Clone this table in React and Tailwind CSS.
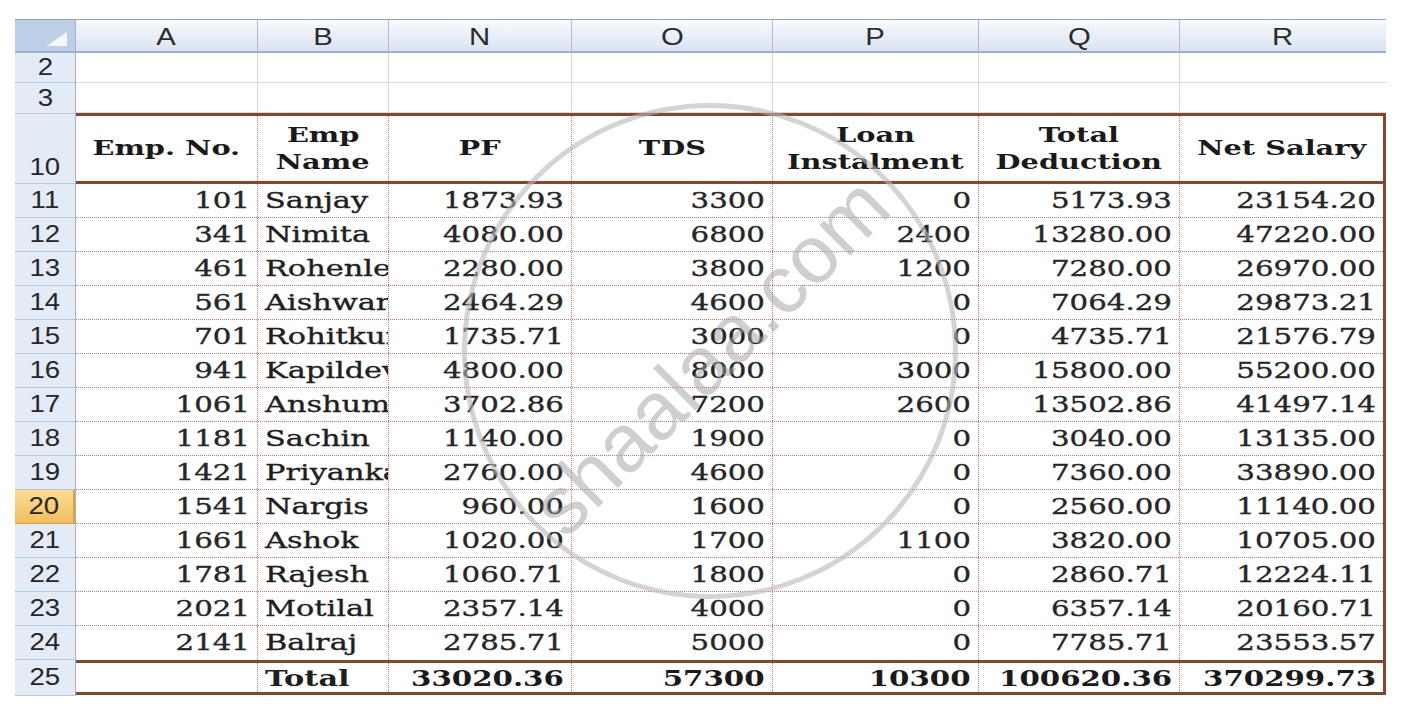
const rows = [
  [11, "101", "Sanjay", "1873.93", "3300", "0", "5173.93", "23154.20"],
  [12, "341", "Nimita", "4080.00", "6800", "2400", "13280.00", "47220.00"],
  [13, "461", "Rohenlei", "2280.00", "3800", "1200", "7280.00", "26970.00"],
  [14, "561", "Aishwarya", "2464.29", "4600", "0", "7064.29", "29873.21"],
  [15, "701", "Rohitkumar", "1735.71", "3000", "0", "4735.71", "21576.79"],
  [16, "941", "Kapildev", "4800.00", "8000", "3000", "15800.00", "55200.00"],
  [17, "1061", "Anshuman", "3702.86", "7200", "2600", "13502.86", "41497.14"],
  [18, "1181", "Sachin", "1140.00", "1900", "0", "3040.00", "13135.00"],
  [19, "1421", "Priyanka", "2760.00", "4600", "0", "7360.00", "33890.00"],
  [20, "1541", "Nargis", "960.00", "1600", "0", "2560.00", "11140.00"],
  [21, "1661", "Ashok", "1020.00", "1700", "1100", "3820.00", "10705.00"],
  [22, "1781", "Rajesh", "1060.71", "1800", "0", "2860.71", "12224.11"],
  [23, "2021", "Motilal", "2357.14", "4000", "0", "6357.14", "20160.71"],
  [24, "2141", "Balraj", "2785.71", "5000", "0", "7785.71", "23553.57"],
];

const totals = ["33020.36", "57300", "10300", "100620.36", "370299.73"];

const letters = [
  ["A", "w-[182px]"],
  ["B", "w-[131px]"],
  ["N", "w-[183px]"],
  ["O", "w-[201px]"],
  ["P", "w-[206px]"],
  ["Q", "w-[201px]"],
  ["R", "flex-1"],
];

const gridCols = "grid grid-cols-[182px_131px_183px_201px_206px_201px_1fr]";
const dotR = "border-r border-dotted border-[#de6b6b]";

// row number cell on the left
const RowHead = ({ n, h, active, end }) => (
  <div
    className={`${h} flex ${end ? "items-end pb-1" : "items-center"} justify-center border-b ${
      active
        ? "bg-gradient-to-b from-[#fbdc93] to-[#f2bf5c] border-[#d9a048] border-r-2 border-r-[#d9a048]"
        : "bg-[#e2ebf6] border-[#b7c8dc]"
    }`}
  >
    <span className="inline-block scale-x-[1.2] text-[23px] leading-none text-[#262626]">{n}</span>
  </div>
);

const Num = ({ v, bold, last }) => (
  <div className={`flex items-center justify-end pr-[7px] overflow-hidden ${last ? "" : dotR}`}>
    <span
      className={`inline-block origin-right scale-x-[1.33] text-[22px] leading-none ${
        bold ? "font-bold text-[#1a1a1a]" : "text-[#262626] [-webkit-text-stroke:0.35px_#262626]"
      }`}
    >
      {v}
    </span>
  </div>
);

const Name = ({ v, bold }) => (
  <div className={`flex items-center pl-[7px] overflow-hidden whitespace-nowrap ${dotR}`}>
    <span
      className={`inline-block origin-left scale-x-[1.38] text-[22px] leading-none text-[#1f1f1f] ${
        bold ? "font-bold" : "[-webkit-text-stroke:0.35px_#1f1f1f]"
      }`}
    >
      {v}
    </span>
  </div>
);

const Head = ({ lines, last }) => (
  <div className={`flex flex-col items-center justify-center leading-[27px] ${last ? "" : dotR}`}>
    {lines.map((l) => (
      <span key={l} className="inline-block scale-x-[1.44] text-[20px] font-bold text-[#1a1a1a] whitespace-nowrap">
        {l}
      </span>
    ))}
  </div>
);

export default function App() {
  return (
    <div className="relative w-[1416px] h-[704px] overflow-hidden bg-white pt-[19px] pl-[15px] font-['DejaVu_Serif',serif]">
      <div className="flex w-[1371px] border-t border-[#8ea5c2]">
        {/* row numbers */}
        <div className="w-[61px] flex flex-col font-['Liberation_Sans',Arial,sans-serif] border-r border-[#9fb4cc]">
          <div className="h-[33px] relative bg-[#bccfe7] border-b-2 border-[#9bb2ce]">
            <svg className="absolute right-[8px] bottom-[5px]" width="20" height="14" viewBox="0 0 20 14">
              <polygon points="20,0 20,14 0,14" fill="#f4f8fc" />
            </svg>
          </div>
          <RowHead n="2" h="h-[30px]" />
          <RowHead n="3" h="h-[31px]" />
          <RowHead n="10" h="h-[70px]" end />
          {rows.map((r) => (
            <RowHead key={r[0]} n={r[0]} h="h-[34px]" active={r[0] === 20} />
          ))}
          <RowHead n="25" h="h-[36px]" />
        </div>

        <div className="flex-1 flex flex-col">
          {/* column letters */}
          <div className="flex h-[33px] bg-gradient-to-b from-[#f8fafd] to-[#d9e4f1] border-b-2 border-[#9bb2ce] font-['Liberation_Sans',Arial,sans-serif]">
            {letters.map(([l, w], i) => (
              <div
                key={l}
                className={`${w} flex items-center justify-center pt-[3px] ${i < 6 ? "border-r border-[#a9bcd4]" : ""}`}
              >
                <span className="inline-block scale-x-[1.22] text-[24px] leading-none text-[#2b2b2b]">{l}</span>
              </div>
            ))}
          </div>

          {/* empty rows 2 and 3 */}
          {["h-[30px]", "h-[30px]"].map((h, k) => (
            <div key={k} className={`flex ${h} border-b border-[#d3dbe8]`}>
              {letters.map(([l, w], i) => (
                <div key={l} className={`${w} ${i < 6 ? "border-r border-[#d3dbe8]" : ""}`} />
              ))}
            </div>
          ))}

          {/* salary table */}
          <div className="border-t-[3px] border-r-[3px] border-b-[3px] border-[#874629]">
            <div className={`${gridCols} h-[68px] border-b-[3px] border-[#874629]`}>
              <Head lines={["Emp. No."]} />
              <Head lines={["Emp", "Name"]} />
              <Head lines={["PF"]} />
              <Head lines={["TDS"]} />
              <Head lines={["Loan", "Instalment"]} />
              <Head lines={["Total", "Deduction"]} />
              <Head lines={["Net Salary"]} last />
            </div>

            {rows.map((r, i) => (
              <div
                key={r[0]}
                className={`${gridCols} h-[34px] ${i < rows.length - 1 ? "border-b border-dotted border-[#de6b6b]" : ""}`}
              >
                <Num v={r[1]} />
                <Name v={r[2]} />
                <Num v={r[3]} />
                <Num v={r[4]} />
                <Num v={r[5]} />
                <Num v={r[6]} />
                <Num v={r[7]} last />
              </div>
            ))}

            <div className={`${gridCols} h-[32px] border-t-[3px] border-[#874629]`}>
              <div className={dotR} />
              <Name v="Total" bold />
              {totals.map((t, i) => (
                <Num key={t} v={t} bold last={i === totals.length - 1} />
              ))}
            </div>
          </div>
        </div>
      </div>

      {/* watermark */}
      <div className="pointer-events-none absolute left-[462px] top-[103px] w-[496px] h-[496px] rounded-full border-[5px] border-[#b8b8b8]/60" />
      <div className="pointer-events-none absolute left-[710px] top-[356px] -translate-x-1/2 -translate-y-1/2 -rotate-[45deg] font-['Liberation_Sans',Arial,sans-serif] text-[82px] leading-none text-[#a0a0a0]/50 whitespace-nowrap">
        shaalaa.com
      </div>
    </div>
  );
}
